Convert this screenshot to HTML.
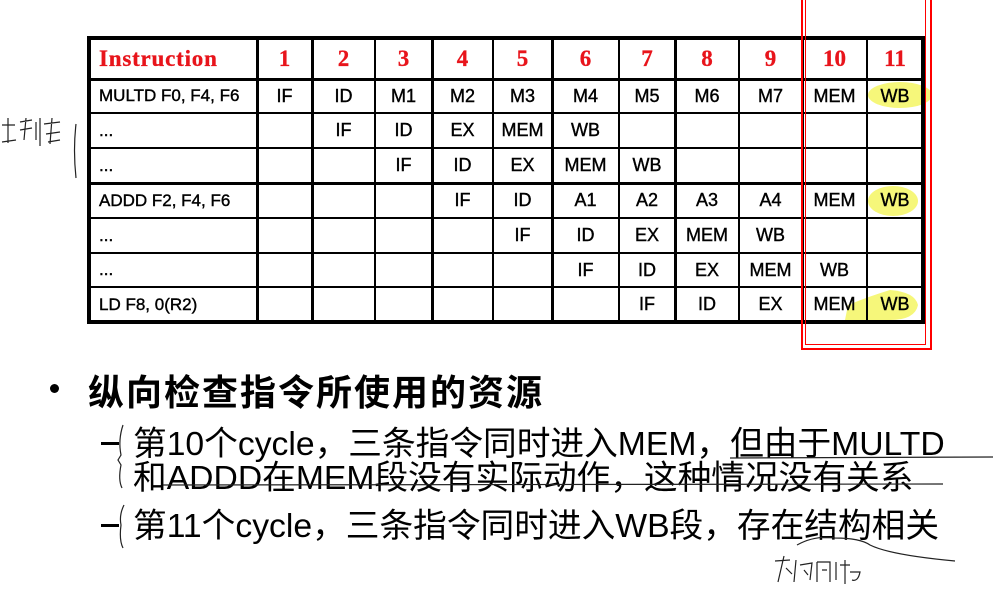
<!DOCTYPE html>
<html><head><meta charset="utf-8"><style>
body{margin:0;width:1000px;height:593px;background:#fff;position:relative;overflow:hidden;font-family:"Liberation Sans","Noto Sans CJK SC",sans-serif}
.l{position:absolute;background:#000}
table{position:absolute;left:89px;top:38px;border-collapse:collapse;table-layout:fixed}
td{padding:0;text-align:center;font-size:18px;color:#000;white-space:nowrap;overflow:hidden;-webkit-text-stroke:0.4px #000}
td:first-child{text-align:left;padding-left:10px;font-size:17px}
tr.h td{color:#e8141b;font-family:"Liberation Serif",serif;font-weight:bold;font-size:23px;-webkit-text-stroke:0.3px #e8141b}
tr.h td:first-child{letter-spacing:0.8px}
.t{position:absolute;white-space:nowrap;color:#000}
</style></head><body>
<svg width="1000" height="593" style="position:absolute;left:0;top:0">
<ellipse cx="900" cy="95" rx="32" ry="13" fill="#f6f77a"/>
<ellipse cx="893" cy="201" rx="25" ry="15" fill="#f6f77a"/>
<path d="M845 320 L848 305 Q870 296 890 290 Q915 292 918 305 Q915 320 890 320 Z" fill="#f6f77a"/>
</svg>
<div class="l" style="left:87px;top:36px;width:4px;height:288px"></div>
<div class="l" style="left:256px;top:36px;width:3px;height:288px"></div>
<div class="l" style="left:311px;top:36px;width:3px;height:288px"></div>
<div class="l" style="left:374px;top:36px;width:2px;height:288px"></div>
<div class="l" style="left:431px;top:36px;width:3px;height:288px"></div>
<div class="l" style="left:492px;top:36px;width:2px;height:288px"></div>
<div class="l" style="left:551px;top:36px;width:3px;height:288px"></div>
<div class="l" style="left:618px;top:36px;width:2px;height:288px"></div>
<div class="l" style="left:674px;top:36px;width:3px;height:288px"></div>
<div class="l" style="left:738px;top:36px;width:2px;height:288px"></div>
<div class="l" style="left:801px;top:36px;width:3px;height:288px"></div>
<div class="l" style="left:866px;top:36px;width:2px;height:288px"></div>
<div class="l" style="left:921px;top:36px;width:4px;height:288px"></div>
<div class="l" style="left:87px;top:36px;width:838px;height:4px"></div>
<div class="l" style="left:87px;top:78px;width:838px;height:3px"></div>
<div class="l" style="left:87px;top:112px;width:838px;height:2px"></div>
<div class="l" style="left:87px;top:147px;width:838px;height:2px"></div>
<div class="l" style="left:87px;top:182px;width:838px;height:3px"></div>
<div class="l" style="left:87px;top:217px;width:838px;height:2px"></div>
<div class="l" style="left:87px;top:252px;width:838px;height:2px"></div>
<div class="l" style="left:87px;top:286px;width:838px;height:2px"></div>
<div class="l" style="left:87px;top:320px;width:838px;height:4px"></div>
<table>
<colgroup><col style="width:168px"><col style="width:55px"><col style="width:63px"><col style="width:57px"><col style="width:61px"><col style="width:59px"><col style="width:67px"><col style="width:56px"><col style="width:64px"><col style="width:63px"><col style="width:65px"><col style="width:56px"></colgroup>
<tr class="h" style="height:41px"><td>Instruction</td><td>1</td><td>2</td><td>3</td><td>4</td><td>5</td><td>6</td><td>7</td><td>8</td><td>9</td><td>10</td><td>11</td></tr>
<tr style="height:34px"><td>MULTD F0, F4, F6</td><td>IF</td><td>ID</td><td>M1</td><td>M2</td><td>M3</td><td>M4</td><td>M5</td><td>M6</td><td>M7</td><td>MEM</td><td>WB</td></tr>
<tr style="height:35px"><td>...</td><td></td><td>IF</td><td>ID</td><td>EX</td><td>MEM</td><td>WB</td><td></td><td></td><td></td><td></td><td></td></tr>
<tr style="height:35px"><td>...</td><td></td><td></td><td>IF</td><td>ID</td><td>EX</td><td>MEM</td><td>WB</td><td></td><td></td><td></td><td></td></tr>
<tr style="height:35px"><td>ADDD F2, F4, F6</td><td></td><td></td><td></td><td>IF</td><td>ID</td><td>A1</td><td>A2</td><td>A3</td><td>A4</td><td>MEM</td><td>WB</td></tr>
<tr style="height:35px"><td>...</td><td></td><td></td><td></td><td></td><td>IF</td><td>ID</td><td>EX</td><td>MEM</td><td>WB</td><td></td><td></td></tr>
<tr style="height:34px"><td>...</td><td></td><td></td><td></td><td></td><td></td><td>IF</td><td>ID</td><td>EX</td><td>MEM</td><td>WB</td><td></td></tr>
<tr style="height:35px"><td>LD F8, 0(R2)</td><td></td><td></td><td></td><td></td><td></td><td></td><td>IF</td><td>ID</td><td>EX</td><td>MEM</td><td>WB</td></tr>
</table>
<div style="position:absolute;left:801px;top:-4px;width:127px;height:352px;border:2px solid #f00;border-top:none"></div>
<div style="position:absolute;left:805px;top:-4px;width:119px;height:348px;border:1px solid #f00;border-top:none"></div>
<div style="position:absolute;left:50px;top:384px;width:9px;height:9px;border-radius:50%;background:#000"></div>
<div class="t" style="left:88px;top:364px;font-size:36px;font-weight:bold;letter-spacing:2px">纵向检查指令所使用的资源</div>
<div style="position:absolute;left:101px;top:442px;width:18px;height:3px;background:#000"></div>
<div class="t" style="left:133px;top:416px;font-size:33.7px">第10个cycle，三条指令同时进入MEM，但由于MULTD</div>
<div class="t" style="left:133px;top:450px;font-size:33.7px">和ADDD在MEM段没有实际动作，这种情况没有关系</div>
<div style="position:absolute;left:101px;top:524px;width:18px;height:3px;background:#000"></div>
<div class="t" style="left:133px;top:498px;font-size:33.7px">第11个cycle，三条指令同时进入WB段，存在结构相关</div>
<svg width="1000" height="593" style="position:absolute;left:0;top:0" fill="none" stroke="#222" stroke-width="1.2">
<path d="M163 485 L943 484"/>
<path d="M730 458 L993 457"/>
<path d="M797 545 Q815 535 835 538 Q860 538 870 545 Q890 555 955 561"/>
<path d="M123 425 Q118 440 121 455 L118 460 L121 465 Q118 480 122 488"/>
<path d="M124 505 Q119 515 121 525 Q119 540 123 548"/>
<path d="M76 124 Q73 150 76 178"/>
<path d="M2 125 L15 125 M8 118 L8 143 M2 142 L16 140 M20 122 L32 120 M26 118 L24 140 M20 130 L32 128 M36 122 L36 140 M40 118 L40 146 M44 124 L60 122 M52 118 L50 144 M46 134 L60 132 M48 142 L60 140"/>
<path d="M775 561 L790 560 M784 556 L778 582 M786 568 L792 574 M796 560 L794 582 M800 565 L812 563 L810 580 M804 570 L808 575 M817 562 L817 582 M817 562 L830 562 L830 582 M822 570 L827 570 M836 562 L836 580 M840 565 L850 565 M845 560 L845 584 M850 572 L860 572 Q858 582 852 580"/>
</svg>
</body></html>
